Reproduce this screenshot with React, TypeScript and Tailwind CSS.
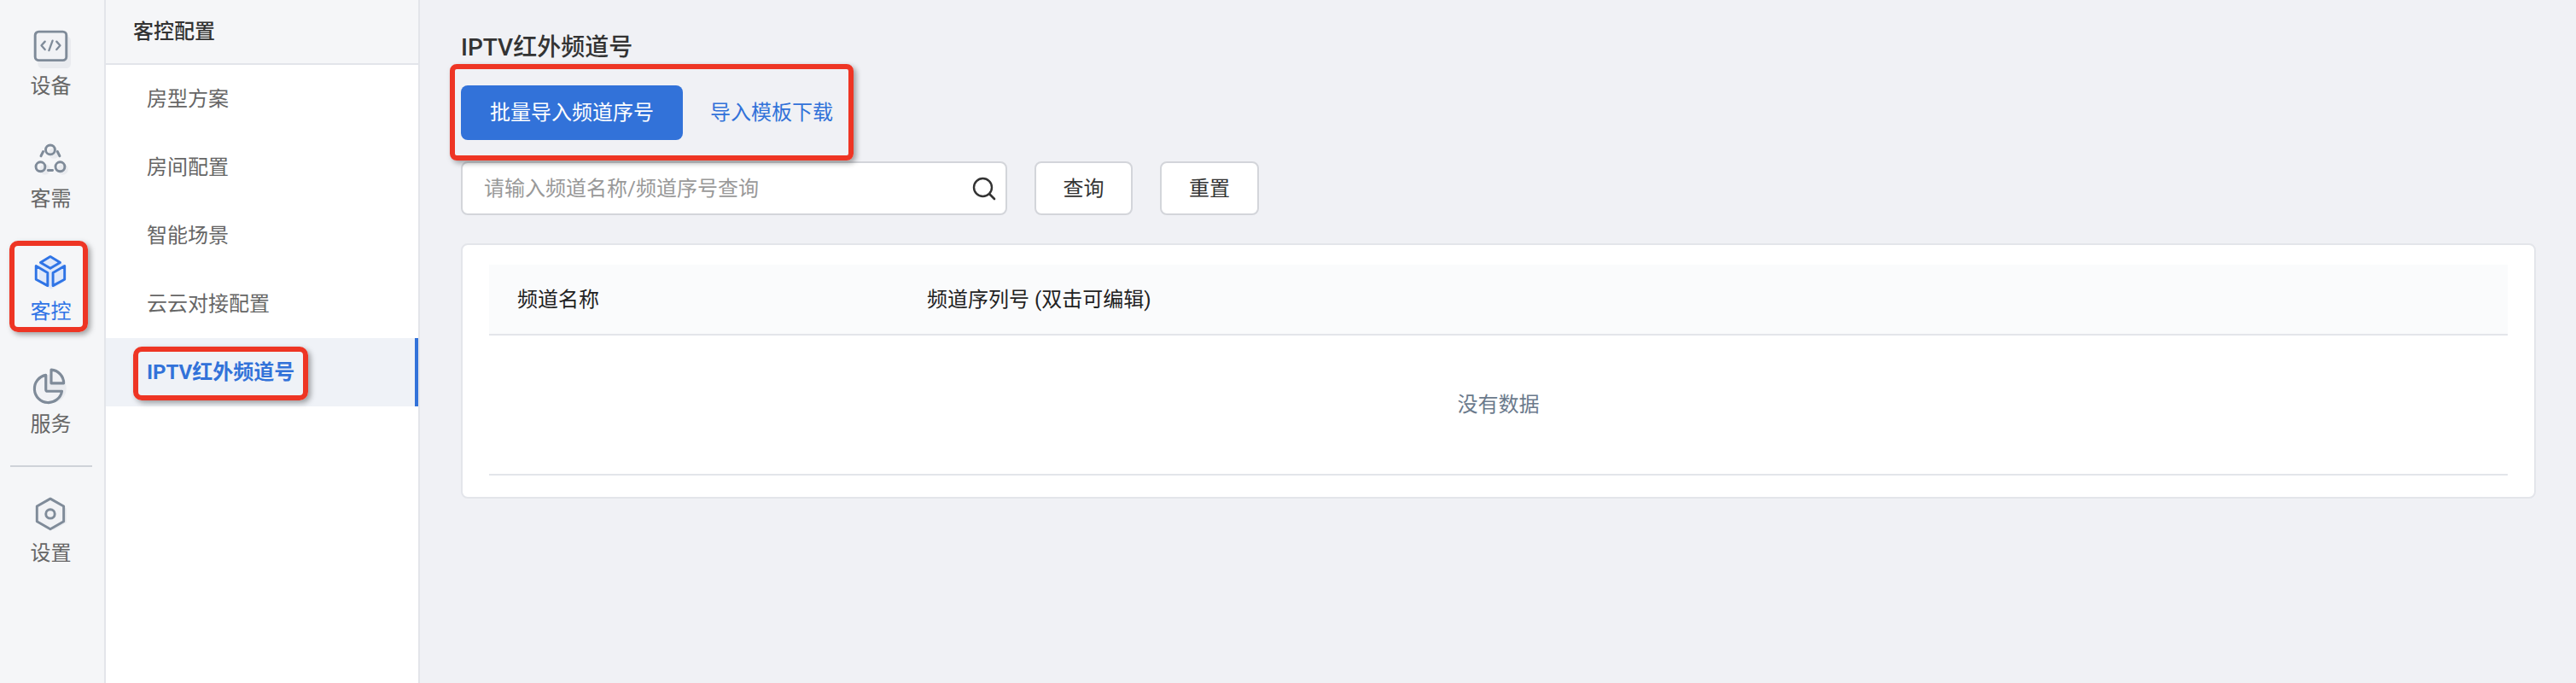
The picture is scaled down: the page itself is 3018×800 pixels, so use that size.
const FONT = 'font-["Roboto","Noto_Sans_CJK_SC",sans-serif]';

const DeviceIcon = () => (
  <svg width="46" height="46" viewBox="0 0 44 44" fill="none">
    <rect x="7" y="8" width="37" height="36" rx="5" fill="#e9ebef" />
    <rect x="4" y="3" width="35" height="32" rx="4" fill="#f1f2f5" stroke="#7f8b99" strokeWidth="2.800" />
    <path d="M15 14l-4 4.500 4 4.500M28 14l4 4.500-4 4.500M23.500 13l-4 11" stroke="#7f8b99" strokeWidth="2.200" strokeLinecap="round" strokeLinejoin="round" />
  </svg>
);

const NeedIcon = () => (
  <svg width="46" height="46" viewBox="0 0 44 44" fill="none">
    <circle cx="25" cy="13" r="6" fill="#e9ebef" />
    <circle cx="15" cy="31" r="6" fill="#e9ebef" />
    <circle cx="35" cy="31" r="6" fill="#e9ebef" />
    <circle cx="21" cy="9" r="5.200" stroke="#7f8b99" strokeWidth="2.800" />
    <circle cx="10" cy="28" r="5.200" stroke="#7f8b99" strokeWidth="2.800" />
    <circle cx="32" cy="28" r="5.200" stroke="#7f8b99" strokeWidth="2.800" />
    <path d="M13 11l-2.500 5M29 11l2.500 5M18.500 32h5" stroke="#7f8b99" strokeWidth="2.800" strokeLinecap="round" />
  </svg>
);

const BoxIcon = () => (
  <svg width="46" height="46" viewBox="0 0 44 44" fill="none">
    <path d="M22 4l14 7v20l-14 8-14-8V11z" fill="#dfe8fa" />
    <path d="M21 2.500l11 6.500-11 6.500-11-6.500z" stroke="#2f74e6" strokeWidth="2.800" strokeLinejoin="round" />
    <path d="M5 13v15l13 7V20.500zM37 13v15l-13 7V20.500z" stroke="#2f74e6" strokeWidth="2.800" strokeLinejoin="round" />
  </svg>
);

const PieIcon = () => (
  <svg width="46" height="46" viewBox="0 0 44 44" fill="none">
    <circle cx="23" cy="24" r="16" fill="#e9ebef" />
    <path d="M16 9a15.500 15.500 0 1 0 18 18H18a2 2 0 0 1-2-2z" stroke="#7f8b99" strokeWidth="3" strokeLinejoin="round" fill="#f1f2f5" />
    <path d="M22 3a15 15 0 0 1 14 15H22z" stroke="#7f8b99" strokeWidth="3" strokeLinejoin="round" fill="#f1f2f5" />
  </svg>
);

const GearIcon = () => (
  <svg width="46" height="46" viewBox="0 0 44 44" fill="none">
    <path d="M25 6l14 8v16l-14 8-14-8V14z" fill="#e9ebef" />
    <path d="M21 3l15 8.500v17L21 37 6 28.500v-17z" stroke="#7f8b99" strokeWidth="2.800" strokeLinejoin="round" fill="#f1f2f5" />
    <circle cx="21" cy="20" r="5" stroke="#7f8b99" strokeWidth="2.800" />
  </svg>
);

const SearchIcon = () => (
  <svg width="30" height="30" viewBox="0 0 30 30" fill="none">
    <circle cx="13.500" cy="13.500" r="10.500" stroke="#333333" strokeWidth="2.400" />
    <path d="M21.500 21.500l5.500 5.500" stroke="#333333" strokeWidth="2.600" strokeLinecap="round" />
  </svg>
);

const railTop = [
  { label: '设备', icon: <DeviceIcon /> },
  { label: '客需', icon: <NeedIcon /> },
  { label: '客控', icon: <BoxIcon />, active: true },
  { label: '服务', icon: <PieIcon /> },
];

const menu = ['房型方案', '房间配置', '智能场景', '云云对接配置'];

const RailItem = ({ label, icon, active }: { label: string; icon: React.ReactNode; active?: boolean }) => (
  <div className="flex h-[132px] flex-col items-center justify-center gap-[6px] pr-[3px]">
    <div className="flex h-[44px] w-[46px] items-center justify-center">{icon}</div>
    <span className={`text-[24px] leading-[32px] ${active ? 'text-[#2f74e6]' : 'text-[#666666]'}`}>{label}</span>
  </div>
);

export default function App() {
  return (
    <div className={`relative flex h-[800px] w-[3018px] overflow-hidden bg-[#f0f1f5] ${FONT}`}>
      {/* Left rail */}
      <div className="w-[124px] shrink-0 border-r-2 border-[#e3e5ea] bg-[#f5f6f8] pt-[10px]">
        {railTop.map((item) => (
          <RailItem key={item.label} {...item} />
        ))}
        <div className="mx-[12px] mt-[7px] mb-[10px] h-[2px] w-[96px] bg-[#cfd2d8]" />
        <RailItem label="设置" icon={<GearIcon />} />
      </div>

      {/* Sub menu */}
      <div className="w-[368px] shrink-0 border-r-2 border-[#e3e5ea] bg-white">
        <div className="flex h-[76px] items-center border-b-2 border-[#e3e5ea] bg-[#f5f6f8] pl-[32px] text-[24px] font-medium text-[#333333]">
          客控配置
        </div>
        {menu.map((name) => (
          <div key={name} className="flex h-[80px] items-center pl-[48px] text-[24px] text-[#666666]">
            {name}
          </div>
        ))}
        <div className="flex h-[80px] items-center border-r-4 border-[#3272d9] bg-[#eff2f7] pl-[48px] text-[24px] font-bold text-[#3272d9]">
          IPTV红外频道号
        </div>
      </div>

      {/* Main */}
      <div className="flex min-w-0 flex-1 flex-col pt-[38px] pr-[47px] pl-[48px]">
        <h1 className="text-[28px] leading-[36px] font-medium text-[#333333]">IPTV红外频道号</h1>
        <div className="mt-[26px] flex items-center">
          <button className="h-[64px] w-[260px] rounded-[8px] bg-[#3272d9] text-[24px] text-white">批量导入频道序号</button>
          <a className="ml-[32px] text-[24px] text-[#3272d9]">导入模板下载</a>
        </div>
        <div className="mt-[25px] flex items-center">
          <div className="flex h-[63px] w-[640px] items-center justify-between rounded-[8px] border-2 border-[#d3d5da] bg-white pr-[10px] pl-[25px]">
            <span className="text-[24px] text-[#999999]">请输入频道名称/频道序号查询</span>
            <SearchIcon />
          </div>
          <button className="ml-[32px] h-[63px] w-[115px] rounded-[8px] border-2 border-[#d3d5da] bg-white text-[24px] text-[#333333]">查询</button>
          <button className="ml-[32px] h-[63px] w-[116px] rounded-[8px] border-2 border-[#d3d5da] bg-white text-[24px] text-[#333333]">重置</button>
        </div>
        <div className="mt-[33px] rounded-[8px] border-2 border-[#e3e5ea] bg-white px-[31px] pt-[23px] pb-[25px]">
          <div className="flex h-[83px] items-center border-b-2 border-[#e3e5ea] bg-[#fafbfc] text-[24px] text-[#222222]">
            <div className="w-[513px] pl-[33px]">频道名称</div>
            <div>频道序列号 (双击可编辑)</div>
          </div>
          <div className="flex h-[164px] items-center justify-center border-b-2 border-[#e3e5ea] text-[24px] text-[#6b7a8c]">
            没有数据
          </div>
        </div>
      </div>

      {/* Red annotation boxes */}
      <div className="absolute top-[75px] left-[527px] h-[113px] w-[473px] rounded-[8px] border-[6px] border-[#ee3524] shadow-[3px_3px_6px_rgba(0,0,0,0.35)]" />
      <div className="absolute top-[282px] left-[11px] h-[107px] w-[92px] rounded-[10px] border-[6px] border-[#ee3524] shadow-[3px_3px_6px_rgba(0,0,0,0.35)]" />
      <div className="absolute top-[406px] left-[156px] h-[63px] w-[205px] rounded-[10px] border-[6px] border-[#ee3524] shadow-[3px_3px_6px_rgba(0,0,0,0.35)]" />
    </div>
  );
}
